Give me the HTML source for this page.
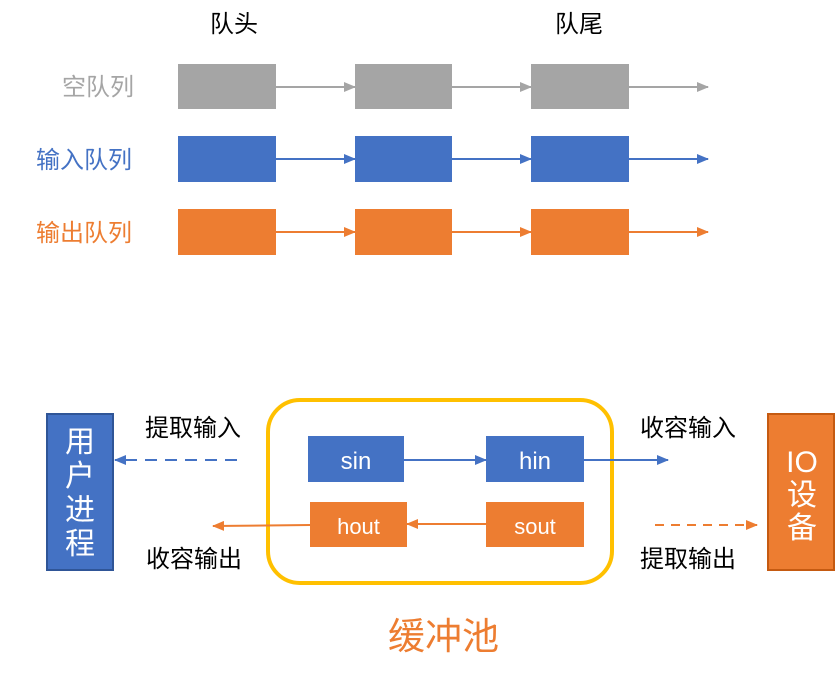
<!DOCTYPE html><html><head><meta charset="utf-8"><style>
body{margin:0;width:835px;height:682px;background:#fff;position:relative;overflow:hidden;font-family:"Liberation Sans","Noto Sans CJK SC",sans-serif}
.t{position:absolute;white-space:nowrap;line-height:1}
</style></head><body>
<svg width="835" height="682" style="position:absolute;left:0;top:0">
<defs>
<marker id="ag" markerWidth="12" markerHeight="10" refX="11" refY="5" orient="auto" markerUnits="userSpaceOnUse"><path d="M0,0L12,5L0,10z" fill="#a5a5a5"/></marker>
<marker id="ab" markerWidth="12" markerHeight="10" refX="11" refY="5" orient="auto" markerUnits="userSpaceOnUse"><path d="M0,0L12,5L0,10z" fill="#4472c4"/></marker>
<marker id="ao" markerWidth="12" markerHeight="10" refX="11" refY="5" orient="auto" markerUnits="userSpaceOnUse"><path d="M0,0L12,5L0,10z" fill="#ed7d31"/></marker>
</defs>
<g fill="#a5a5a5"><rect x="178" y="64" width="98" height="45"/><rect x="355" y="64" width="97" height="45"/><rect x="531" y="64" width="98" height="45"/></g>
<g fill="#4472c4"><rect x="178" y="136" width="98" height="46"/><rect x="355" y="136" width="97" height="46"/><rect x="531" y="136" width="98" height="46"/></g>
<g fill="#ed7d31"><rect x="178" y="209" width="98" height="46"/><rect x="355" y="209" width="97" height="46"/><rect x="531" y="209" width="98" height="46"/></g>
<g stroke="#a5a5a5" stroke-width="2" marker-end="url(#ag)"><line x1="276" y1="87" x2="355" y2="87"/><line x1="452" y1="87" x2="531" y2="87"/><line x1="629" y1="87" x2="708" y2="87"/></g>
<g stroke="#4472c4" stroke-width="2" marker-end="url(#ab)"><line x1="276" y1="159" x2="355" y2="159"/><line x1="452" y1="159" x2="531" y2="159"/><line x1="629" y1="159" x2="708" y2="159"/></g>
<g stroke="#ed7d31" stroke-width="2" marker-end="url(#ao)"><line x1="276" y1="232" x2="355" y2="232"/><line x1="452" y1="232" x2="531" y2="232"/><line x1="629" y1="232" x2="708" y2="232"/></g>
<rect x="47" y="414" width="66" height="156" fill="#4472c4" stroke="#2f5597" stroke-width="2"/>
<rect x="768" y="414" width="66" height="156" fill="#ed7d31" stroke="#c55a11" stroke-width="2"/>
<rect x="268" y="400" width="344" height="183" rx="32" fill="none" stroke="#ffc000" stroke-width="4"/>
<rect x="308" y="436" width="96" height="46" fill="#4472c4"/>
<rect x="486" y="436" width="98" height="46" fill="#4472c4"/>
<rect x="310" y="502" width="97" height="45" fill="#ed7d31"/>
<rect x="486" y="502" width="98" height="45" fill="#ed7d31"/>
<g stroke="#4472c4" stroke-width="2" marker-end="url(#ab)"><line x1="404" y1="460" x2="486" y2="460"/><line x1="584" y1="460" x2="668" y2="460"/><line x1="237" y1="460" x2="115" y2="460" stroke-dasharray="12,8"/></g>
<g stroke="#ed7d31" stroke-width="2" marker-end="url(#ao)"><line x1="486" y1="524" x2="407" y2="524"/><line x1="310" y1="525" x2="213" y2="526"/><line x1="655" y1="525" x2="757" y2="525" stroke-dasharray="9,7"/></g>
</svg>
<div class="t" style="left:210px;top:13px;font-size:24px">队头</div>
<div class="t" style="left:555px;top:13px;font-size:24px">队尾</div>
<div class="t" style="left:62px;top:76px;font-size:24px;color:#a5a5a5">空队列</div>
<div class="t" style="left:36px;top:149px;font-size:24px;color:#4472c4">输入队列</div>
<div class="t" style="left:36px;top:222px;font-size:24px;color:#ed7d31">输出队列</div>
<div class="t" style="left:65px;top:426px;font-size:30px;color:#fff;width:30px;line-height:34px;white-space:normal">用户进程</div>
<div class="t" style="left:784px;top:446px;font-size:30px;color:#fff;width:36px;line-height:33px;white-space:normal;text-align:center">IO 设备</div>
<div class="t" style="left:145px;top:417px;font-size:24px">提取输入</div>
<div class="t" style="left:146px;top:548px;font-size:24px">收容输出</div>
<div class="t" style="left:640px;top:417px;font-size:24px">收容输入</div>
<div class="t" style="left:640px;top:548px;font-size:24px">提取输出</div>
<div class="t" style="left:308px;top:450px;width:96px;text-align:center;font-size:24px;color:#fff">sin</div>
<div class="t" style="left:486px;top:450px;width:98px;text-align:center;font-size:24px;color:#fff">hin</div>
<div class="t" style="left:310px;top:516px;width:97px;text-align:center;font-size:22px;color:#fff">hout</div>
<div class="t" style="left:486px;top:516px;width:98px;text-align:center;font-size:22px;color:#fff">sout</div>
<div class="t" style="left:388px;top:618px;font-size:37px;color:#ed7d31">缓冲池</div>
</body></html>
